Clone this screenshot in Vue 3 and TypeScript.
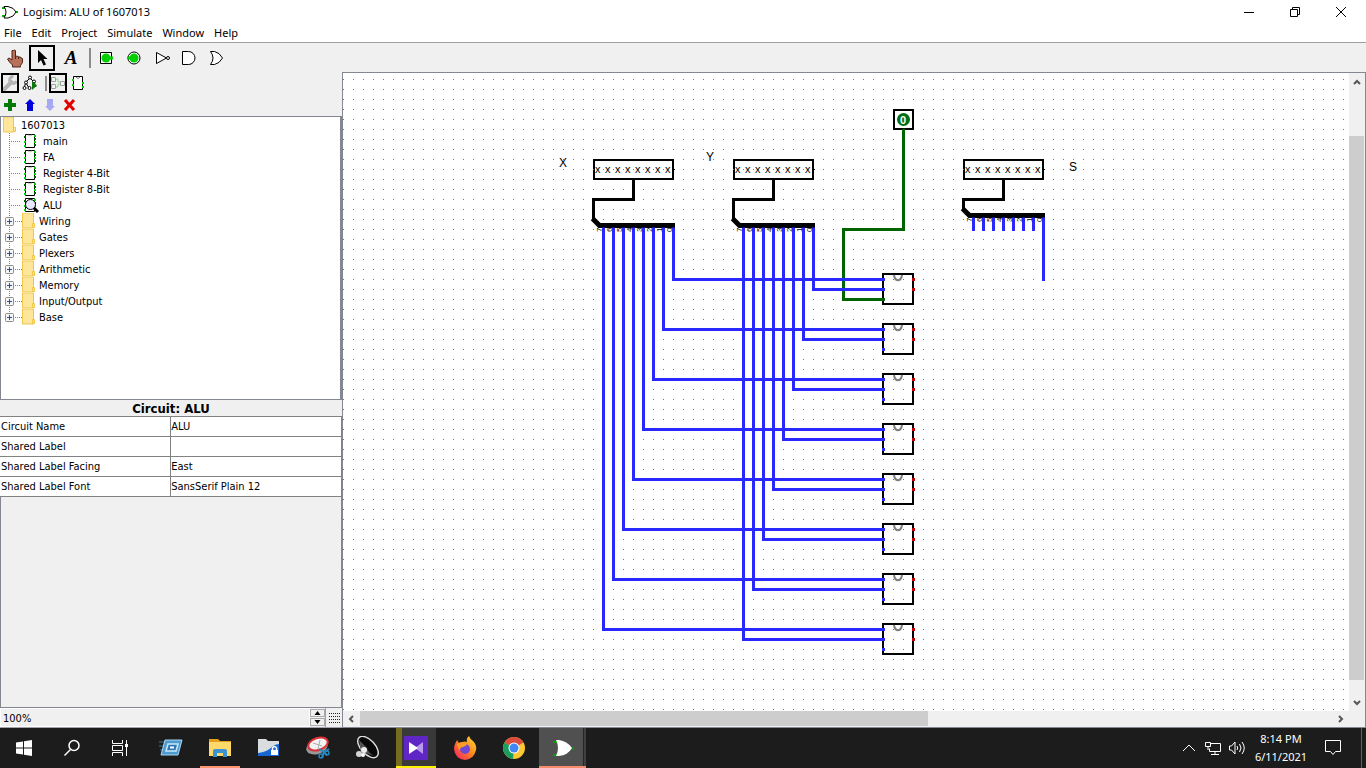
<script setup lang="ts">
import { ref } from 'vue'

const menus = ['File', 'Edit', 'Project', 'Simulate', 'Window', 'Help']
const circuits = ['main', 'FA', 'Register 4-Bit', 'Register 8-Bit', 'ALU']
const libraries = ['Wiring', 'Gates', 'Plexers', 'Arithmetic', 'Memory', 'Input/Output', 'Base']
const attributes = [
  ['Circuit Name', 'ALU'],
  ['Shared Label', ''],
  ['Shared Label Facing', 'East'],
  ['Shared Label Font', 'SansSerif Plain 12'],
]
const zoom = ref('100%')

const bits = [0, 1, 2, 3, 4, 5, 6, 7]
const inputs = [
  { x: 593, bar: 225 },
  { x: 733, bar: 225 },
  { x: 963, bar: 215 },
]
const wireX = (i: number) => `M${673 - 10 * i} 227V${279 + 50 * i}H884.5`
const wireY = (i: number) => `M${813 - 10 * i} 227V${289 + 50 * i}H884.5`
</script>

<template>
  <div class="screen">
    <header class="titlebar">
      <svg class="app-icon" width="18" height="18" viewBox="0 0 18 18">
        <path d="M1 5h4M1 13h4M14 9h3" stroke="#00b000" stroke-width="2" />
        <path d="M3 3.500h4q6 1 8 5.500-2 5-8 6h-4q4-6 0-11.500z" fill="#fff" stroke="#000" />
      </svg>
      <span class="title">Logisim: ALU of 1607013</span>
      <button class="win" aria-label="Minimize"><svg width="12" height="12"><path d="M1 6.500h10" stroke="#000" /></svg></button>
      <button class="win" aria-label="Restore"><svg width="12" height="12"><path d="M1.500 3.500h7v7h-7zM3.500 3v-1.500h7v7h-1.500" fill="none" stroke="#000" /></svg></button>
      <button class="win" aria-label="Close"><svg width="12" height="12"><path d="M1 1l10 10M11 1l-10 10" stroke="#000" /></svg></button>
    </header>
    <nav class="menubar">
      <button v-for="m in menus" :key="m">{{ m }}</button>
    </nav>
    <div class="toolbar">
      <button class="tool" aria-label="Poke">
        <svg width="26" height="26"><path d="M12.500 5.500q1-1 2 0v6l2-.5 1 1 2 0 .5 1 1.500.5v4l-2 3v1.500h-8v-2l-3-3-2-3 1.500-1 3 2v-9.500z" fill="#b9705a" stroke="#4d2417" /><path d="M14.500 11v3M17.500 12v2" stroke="#4d2417" /></svg>
      </button>
      <button class="tool on" aria-label="Select">
        <svg width="26" height="26"><path d="M9 5v13l3-3 2.500 5.500 2.500-1-2.500-5.500h4z" fill="#000" /></svg>
      </button>
      <button class="tool letter" aria-label="Text">A</button>
      <span class="sep"></span>
      <button class="tool" aria-label="Input pin">
        <svg width="26" height="26"><path d="M7.500 7.500h11v11h-11z" fill="#fff" stroke="#000" /><circle cx="13" cy="13" r="4.500" fill="#00d000" /><path d="M17 13h3" stroke="#00d000" stroke-width="3" /></svg>
      </button>
      <button class="tool" aria-label="Output pin">
        <svg width="26" height="26"><circle cx="13" cy="13" r="6" fill="#fff" stroke="#000" /><circle cx="13" cy="13" r="4.500" fill="#00d000" /><path d="M6 13h4" stroke="#00d000" stroke-width="3" /></svg>
      </button>
      <button class="tool" aria-label="NOT gate">
        <svg width="26" height="26"><path d="M7.500 7.500v11l10-5.500z" fill="#fff" stroke="#000" /><circle cx="19" cy="13" r="1.500" fill="#fff" stroke="#000" /></svg>
      </button>
      <button class="tool" aria-label="AND gate">
        <svg width="26" height="26"><path d="M5.500 6.500h6a6 6 0 0 1 0 13h-6z" fill="#fff" stroke="#000" /></svg>
      </button>
      <button class="tool" aria-label="OR gate">
        <svg width="26" height="26"><path d="M5.500 6.500h4q5 1 8 6.500-3 5.500-8 6.500h-4q5-6.500 0-13z" fill="#fff" stroke="#000" /></svg>
      </button>
    </div>

    <div class="workspace">
      <aside class="side">
        <div class="minibar">
          <button class="mini on" aria-label="Design view">
            <svg width="18" height="20"><path d="M3.500 16l7-7" stroke="#b4b4b4" stroke-width="4" stroke-linecap="round" /><path d="M12.500 3.500a3.500 3.500 0 1 0 3 4.500" fill="none" stroke="#b4b4b4" stroke-width="3" /></svg>
          </button>
          <button class="mini" aria-label="Simulation tree">
            <svg width="18" height="20"><path d="M9 5l-4 4-2 6M5 10l3 5M9 5l4 4 2 5" fill="none" stroke="#000" /><g fill="#fff" stroke="#000"><circle cx="9" cy="4.500" r="1.500" /><circle cx="5" cy="9.500" r="1.500" /><circle cx="13" cy="8.500" r="1.500" /><circle cx="3.500" cy="15" r="1.500" /><circle cx="8.500" cy="15" r="1.500" /></g><path d="M11 8v9l5-4.500z" fill="#087a08" /></svg>
          </button>
          <span class="sep small"></span>
          <button class="mini on" aria-label="Edit layout">
            <svg width="18" height="20"><path d="M6 6h3v3M6 14h3v-3h2M9 9h2" fill="none" stroke="#8fd68f" /><g fill="#f4f4f4" stroke="#a0a0a0"><path d="M2.500 4.500h4v4h-4zM2.500 11.500h4v4h-4zM11.500 8.500h4v4h-4z" /></g></svg>
          </button>
          <button class="mini" aria-label="Edit appearance">
            <svg width="18" height="20"><path d="M4.500 3.500h9v13h-9z" fill="#fff" stroke="#000" /><path d="M7 4q2 3 4 0" fill="none" stroke="#777" /><path d="M3 7h2M3 12h2M13 10h2M13 14h2" stroke="#00d000" stroke-width="2" /></svg>
          </button>
        </div>
        <div class="minibar">
          <button class="mini" aria-label="Add circuit"><svg width="18" height="20"><path d="M9 4v12M3 10h12" stroke="#087a08" stroke-width="4" /></svg></button>
          <button class="mini" aria-label="Move up"><svg width="18" height="20"><path d="M9 4l5 5h-2v7h-6v-7h-2z" fill="#0000dc" /></svg></button>
          <button class="mini" aria-label="Move down"><svg width="18" height="20"><path d="M9 16l5-5h-2v-7h-6v7h-2z" fill="#a8a8f0" /></svg></button>
          <button class="mini" aria-label="Delete"><svg width="18" height="20"><path d="M4 5l9 10M13 5l-9 10" stroke="#e00000" stroke-width="3" /></svg></button>
        </div>
        <ul class="tree">
          <li>
            <svg width="20" height="16"><path d="M2.500 0h10v15h-10z" fill="#ffe69b" stroke="#efc64c" /><path d="M12.500 10.500h2v4h-2z" fill="#ffe69b" stroke="#efc64c" /></svg><span>1607013</span>
          </li>
          <li v-for="c in circuits" :key="c">
            <svg width="42" height="16">
              <path d="M8.500 0v16M10 8.500h10" stroke="#808080" stroke-dasharray="1 1" />
              <path d="M24.500 1.500h9v13h-9z" fill="#fff" stroke="#000" />
              <path v-if="c !== 'ALU'" d="M27 2q2 2 4 0" fill="none" stroke="#bbb" />
              <path d="M23 4h2M33 6h2M33 12h2" stroke="#006000" stroke-width="2" /><path d="M23 9h2M23 13h2M33 3h2M33 9h2" stroke="#00d800" stroke-width="2" />
              <template v-if="c === 'ALU'">
                <circle cx="29.500" cy="7.500" r="5" fill="#e8e8ff" stroke="#000" />
                <path d="M33 11l4 4" stroke="#000" stroke-width="3" />
              </template>
            </svg><span>{{ c }}</span>
          </li>
          <li v-for="(l, i) in libraries" :key="l">
            <svg width="38" height="16">
              <path :d="i < 6 ? 'M8.500 0v16' : 'M8.500 0v8'" stroke="#808080" stroke-dasharray="1 1" />
              <path d="M14 8.500h7" stroke="#808080" stroke-dasharray="1 1" />
              <rect x="4.500" y="4.500" width="8" height="8" rx="1" fill="#f5f5f5" stroke="#8c8c8c" />
              <path d="M6 8.500h5M8.500 6v5" stroke="#2b4f9c" />
              <path d="M21.500 0h11v15h-11z" fill="#ffe69b" stroke="#efc64c" /><path d="M31.500 10.500h2v4h-2z" fill="#ffe69b" stroke="#efc64c" />
            </svg><span>{{ l }}</span>
          </li>
        </ul>
        <h2 class="attr-title">Circuit: ALU</h2>
        <table class="attrs">
          <tbody>
            <tr v-for="a in attributes" :key="a[0]"><th scope="row">{{ a[0] }}</th><td>{{ a[1] }}</td></tr>
          </tbody>
        </table>
        <div class="filler"></div>
        <div class="zoombar">
          <input v-model="zoom" aria-label="Zoom" />
          <div class="spin">
            <button aria-label="Zoom in"><svg width="7" height="4"><path d="M3.500 0l3 4h-6z" /></svg></button>
            <button aria-label="Zoom out"><svg width="7" height="4"><path d="M3.500 4l3-4h-6z" /></svg></button>
          </div>
          <button class="grid" aria-label="Show grid">
            <svg width="11" height="12"><path v-for="y in 4" :key="y" :d="`M0 ${y * 3 - 1.5}h11`" stroke="#222" stroke-dasharray="1 1" /></svg>
          </button>
        </div>
      </aside>

      <main class="view">
        <div class="upper">
          <svg class="canvas" role="img" aria-label="ALU circuit">
            <defs>
              <pattern id="dots" width="10" height="10" patternUnits="userSpaceOnUse"><path d="M3 9h1v1h-1z" fill="#777" /></pattern>
            </defs>
            <g transform="translate(-343 -73)">
              <rect x="343" y="73" width="100%" height="100%" fill="url(#dots)" />
              <g class="caption"><text x="559" y="167">X</text><text x="706" y="161">Y</text><text x="1069" y="171">S</text></g>
              <g v-for="(p, n) in inputs" :key="p.x">
                <rect :x="p.x + 1" y="160" width="79" height="19" fill="#fff" stroke="#000" stroke-width="2" />
                <rect v-for="b in bits" :key="b" :x="p.x + 10 * b" y="169" width="1" height="1" fill="#777" />
                <text v-for="b in bits" :key="'x' + b" class="bit" :x="p.x + 2 + 10 * b" y="173">x</text>
                <path :d="`M${p.x + 79} 169.500h3`" stroke="#000" />
                <g transform="translate(.5 .5)" fill="none">
                  <path :d="`M${p.x + 40} 179v20h-40V${p.bar - 6}`" stroke="#000" stroke-width="3" />
                  <path :d="`M${p.x - 1} ${p.bar - 7}l7 7h75.5`" stroke="#000" stroke-width="5" />
                  <template v-if="n === 2">
                    <path v-for="b in bits" :key="b" :d="`M${p.x + 10 + 10 * b} 217V${b === 7 ? 280.5 : 230.5}`" stroke="#2828ff" stroke-width="3" />
                  </template>
                </g>
                <text v-for="b in bits" :key="'d' + b" class="digit" :transform="`translate(${p.x + 9 + 10 * b} ${p.bar + 7}) rotate(-90)`">{{ 7 - b }}</text>
              </g>
              <rect v-for="i in bits" :key="'chip' + i" x="883" :y="274 + 50 * i" width="30" height="30" fill="none" stroke="#000" stroke-width="2" />
              <path v-for="i in bits" :key="'n' + i" :d="`M894 ${275 + 50 * i}c1 7 7 7 8 0`" fill="none" stroke="#808080" stroke-width="2" />
              <g transform="translate(.5 .5)" fill="none" stroke-width="3">
                <path d="M903 129v100h-60v70h41.500" stroke="#006400" />
                <path v-for="i in bits" :key="'a' + i" :d="wireX(i)" stroke="#2828ff" />
                <path v-for="i in bits" :key="'b' + i" :d="wireY(i)" stroke="#2828ff" />
              </g>
              <rect v-for="i in 7" :key="'c' + i" x="882" :y="298 + 50 * i" width="3" height="3" fill="#2828ff" />
              <template v-for="i in bits" :key="'r' + i">
                <rect x="912" :y="278 + 50 * i" width="3" height="3" fill="#c00000" />
                <rect x="912" :y="288 + 50 * i" width="3" height="3" fill="#c00000" />
              </template>
              <rect x="894" y="110" width="19" height="19" fill="#fff" stroke="#000" stroke-width="2" />
              <circle cx="903.500" cy="119.500" r="6.500" fill="#006e12" />
              <text class="zero" x="903" y="124">0</text>
              <path d="M902 129h3v2h-3z" fill="#006400" />
            </g>
          </svg>
          <div class="vscroll">
            <button aria-label="Scroll up"><svg width="8" height="8"><path d="M1 6l3-3 3 3" /></svg></button>
            <div class="vtrack"><div class="thumb"></div></div>
            <button aria-label="Scroll down"><svg width="8" height="8"><path d="M1 2l3 3 3-3" /></svg></button>
          </div>
        </div>
        <div class="hscroll">
          <button aria-label="Scroll left"><svg width="8" height="8"><path d="M5 1l-3 3 3 3" /></svg></button>
          <div class="htrack"><div class="thumb"></div></div>
          <button aria-label="Scroll right"><svg width="8" height="8"><path d="M3 1l3 3-3 3" /></svg></button>
        </div>
      </main>
    </div>

    <footer class="taskbar">
      <button class="sys" aria-label="Start"><svg width="16" height="16" fill="#fff"><path d="M0 2.500l7-1v6h-7zM8 1.300l8-1.300v7.500h-8zM0 8.500h7v6l-7-1zM8 8.500h8v7.500l-8-1.300z" /></svg></button>
      <button class="sys" aria-label="Search"><svg width="18" height="18" fill="none" stroke="#fff" stroke-width="1.500"><circle cx="11" cy="6.500" r="5" /><path d="M7.500 10.500l-6 6" /></svg></button>
      <button class="sys" aria-label="Task View"><svg width="18" height="16" fill="none" stroke="#fff"><path d="M1.500 0v3.500h10v-3.500M1.500 16v-3.500h10v3.500M1.500 5.500h10v5h-10zM15.500 0v16" /><path d="M14 4h3v3h-3z" fill="#fff" stroke="none" /></svg></button>
      <span class="gap"></span>
      <button class="app" aria-label="Run">
        <svg width="24" height="24"><path d="M0 6h5M0 10h4M1 14h3" stroke="#3a7396" /><path d="M6 4h17l-4 15h-17z" fill="#4f9bd0" stroke="#a9d7f2" /><path d="M9 8h10l-2 7h-10z" fill="#2f77b5" stroke="#c7e9fb" stroke-width="1.500" /><path d="M11 11.500h4" stroke="#fff" stroke-width="2" /></svg>
      </button>
      <button class="app open" aria-label="File Explorer">
        <svg width="24" height="24"><path d="M1 3h9l2 2h11v15h-22z" fill="#e5a11b" /><path d="M1 6h22v14h-22z" fill="#ffd96a" /><path d="M5 21v-6q0-2 2-2h10q2 0 2 2v6h-4v-4h-6v4z" fill="#3c93d4" /></svg>
      </button>
      <button class="app" aria-label="Secure folder">
        <svg width="24" height="24"><path d="M1 3h8l2 2h11v15h-21z" fill="#d9dde0" /><path d="M1 17q9-1 14-6 3-3 7-3v12h-21z" fill="#1767d2" /><path d="M14 14h7v5h-7z" fill="#fff" /><path d="M15.500 14v-2q2-3 4 0v2" fill="none" stroke="#fff" stroke-width="1.500" /></svg>
      </button>
      <button class="app" aria-label="Snipping Tool">
        <svg width="24" height="24"><ellipse cx="11" cy="11" rx="11" ry="7" fill="#999" transform="rotate(-18 11 11)" /><ellipse cx="12" cy="8" rx="10" ry="6" fill="#f2f2f2" stroke="#d9303a" stroke-width="2" transform="rotate(-18 12 8)" /><path d="M7 7l9 3M14 4l-2 9" stroke="#aaa" /><path d="M13 13l5 3 5-3M18 16l-2 5M18 16l3 3" stroke="#2888bf" stroke-width="2" fill="none" /><circle cx="15" cy="20" r="2" fill="none" stroke="#2888bf" stroke-width="1.500" /><circle cx="21" cy="17" r="2" fill="none" stroke="#2888bf" stroke-width="1.500" /></svg>
      </button>
      <button class="app" aria-label="Sound">
        <svg width="26" height="24"><ellipse cx="14" cy="11" rx="7" ry="13" fill="#080808" stroke="#ddd" stroke-width="1.500" transform="rotate(-43 14 11)" /><path d="M5 4l2 12 14 4q-7-3-8-8z" fill="#555" /><circle cx="10" cy="14" r="3" fill="#eee" /><circle cx="5" cy="18" r="3" fill="#d5d5d5" /><circle cx="9" cy="19" r="2" fill="#fff" /></svg>
      </button>
      <button class="app media" aria-label="Media player">
        <svg width="24" height="24"><rect width="24" height="24" rx="1" fill="#6026c5" /><path d="M19 6l-8 6 8 6z" fill="#b79bea" /><path d="M5 6l9 6-9 6z" fill="#fff" /></svg>
      </button>
      <button class="app" aria-label="Firefox">
        <svg width="24" height="24"><defs><linearGradient id="fx" x1="1" y1="0" x2="0" y2="1"><stop offset="0" stop-color="#ffe53b" /><stop offset=".45" stop-color="#ff8a1c" /><stop offset="1" stop-color="#f7166f" /></linearGradient></defs><path d="M2 8l2-4 2 3 3-1q3-1 5 0-1-4 2-6 1 3 4 5 4 4 3 9-2 9-11 10-10-1-11-11 0-3 1-5z" fill="url(#fx)" /><circle cx="12" cy="13" r="5" fill="#7048d8" /><path d="M4 8q4-3 8-1l2 2-4 2q-3 0-3 3-3-2-3-6z" fill="#ff9d25" /></svg>
      </button>
      <button class="app" aria-label="Chrome">
        <svg width="24" height="24"><circle cx="12" cy="12" r="11" fill="#fcc934" /><path d="M12 12L2.500 6.500a11 11 0 0 1 19 0z" fill="#dc4b3e" /><path d="M12 12L2.500 6.500a11 11 0 0 0 8.500 16.500z" fill="#1b9d5b" /><circle cx="12" cy="12" r="5.500" fill="#fff" /><circle cx="12" cy="12" r="4.500" fill="#4285f4" /></svg>
      </button>
      <button class="app active" aria-label="Logisim">
        <svg width="24" height="24"><path d="M2 6h5M2 19h5M19 12.500h4" stroke="#00a000" stroke-width="2" /><path d="M5 4q4 8 0 16h3q9-1 13-8-5-7-13-8z" fill="#fff" /></svg>
      </button>
      <div class="tray">
        <button aria-label="Hidden icons"><svg width="14" height="14"><path d="M1 10l6-6 6 6" /></svg></button>
        <button aria-label="Network"><svg width="18" height="16"><path d="M6 3.500h10.500v8h-11v-3M11 12v3M7 14.500h8M1.500 2.500h5v4h-5zM4 7v3" /></svg></button>
        <button aria-label="Volume"><svg width="18" height="14"><path d="M1.500 5h2l3.500-4v12l-3.500-4h-2zM9 5q1.500 2 0 4M11.500 3q3 4 0 8M14 1q4.500 6 0 12" /></svg></button>
        <div class="clock"><span>8:14 PM</span><span>6/11/2021</span></div>
        <button class="notes" aria-label="Notifications"><svg width="18" height="18"><path d="M1.500 1.500h15v11h-5l-2.500 3-2.500-3h-5z" /></svg></button>
        <span class="desktop"></span>
      </div>
    </footer>
  </div>
</template>

<style>
body { margin: 0; }
</style>

<style scoped>
* { box-sizing: border-box; }
button { padding: 0; border: 0; background: none; font: inherit; color: inherit; }
svg { display: block; flex: none; }
.screen { height: 100vh; display: flex; flex-direction: column; overflow: hidden; background: #fff; color: #000; font: 11px/16px "Noto Sans", "Open Sans", sans-serif; }
.titlebar { display: flex; align-items: center; height: 23px; flex: none; }
.app-icon { margin-left: 1px; }
.title { margin-left: 4px; flex: 1; }
.win { width: 46px; height: 22px; display: flex; align-items: center; justify-content: center; }
.win:last-child { margin-right: 2px; }
.menubar { display: flex; height: 20px; flex: none; padding-left: 4px; gap: 10px; border-bottom: 1px solid #a0a0a0; }
.toolbar { display: flex; align-items: center; gap: 2px; height: 29px; flex: none; padding-left: 1px; background: #f0f0f0; }
.tool { width: 26px; height: 26px; }
.on { outline: 2px solid #000; outline-offset: -2px; }
.letter { font: italic bold 19px/26px "Liberation Serif", serif; padding-left: 2px; }
.sep { width: 2px; height: 20px; margin: 0 0 0 4px; background: #8c8c8c; }
.small { height: 15px; margin-top: 3px; }
.workspace { flex: 1; min-height: 0; display: flex; }
.side { width: 343px; flex: none; display: flex; flex-direction: column; background: #f0f0f0; border-right: 1px solid #828790; font: 11px/16px "DejaVu Sans Condensed", "DejaVu Sans", sans-serif; font-stretch: condensed; }
.minibar { display: flex; gap: 2px; padding: 1px 0 0 1px; height: 22px; flex: none; align-items: flex-start; }
.mini { width: 18px; height: 20px; }
.tree { list-style: none; margin: 0; padding: 0; height: 284px; flex: none; background: #fff; border: 1px solid #828790; border-right-width: 2px; }
.tree li { display: flex; height: 16px; line-height: 18px; }
.attr-title { margin: 0; height: 16px; flex: none; font: bold 13px/18px "DejaVu Sans Condensed", "DejaVu Sans", sans-serif; text-align: center; }
.attrs { border-collapse: collapse; table-layout: fixed; width: 342px; background: #fff; }
.attrs th, .attrs td { height: 20px; padding: 1px 0 0 1px; border: 1px solid #828282; font-weight: normal; text-align: left; line-height: 16px; }
.attrs td { padding-left: 0; }
.attrs th { border-left: 0; }
.filler { flex: 1; border: 1px solid #828790; border-top: 0; }
.zoombar { height: 20px; flex: none; display: flex; border-bottom: 1px solid #a0a4aa; }
.zoombar input { flex: 1; min-width: 0; border: 1px solid #fff; background: #f0f0f0; padding: 2px 2px 0; font: inherit; }
.spin { width: 15px; display: flex; flex-direction: column; gap: 1px; padding: 1px 0; }
.spin button { flex: 1; border: 1px solid #aaa; display: flex; align-items: center; justify-content: center; }
.grid { width: 17px; display: flex; align-items: center; justify-content: center; border-left: 1px solid #a0a4aa; }
.view { flex: 1; min-width: 0; display: flex; flex-direction: column; border: 1px solid #828790; border-left: 0; }
.upper { flex: 1; min-height: 0; display: flex; }
.canvas { flex: 1; min-width: 0; height: 100%; }
.caption { font: 12px "Liberation Sans", sans-serif; }
.bit { font: 11px "Liberation Sans", sans-serif; }
.digit { font: 8px "Liberation Sans", sans-serif; }
.zero { font: bold 11px "Liberation Sans", sans-serif; fill: #fff; text-anchor: middle; }
.vscroll { width: 16px; flex: none; display: flex; flex-direction: column; background: #f0f0f0; }
.vscroll button, .hscroll button { width: 15px; height: 17px; flex: none; display: flex; align-items: center; justify-content: center; }
.vscroll path, .hscroll path { fill: none; stroke: #555; stroke-width: 2; }
.vtrack { flex: 1; padding: 46px 1px 14px 0; }
.thumb { background: #cdcdcd; height: 100%; }
.hscroll { height: 16px; flex: none; display: flex; background: #f0f0f0; padding-right: 17px; }
.hscroll button { width: 17px; height: 15px; }
.htrack { flex: 1; }
.htrack .thumb { width: 58.5%; height: 15px; }
.taskbar { height: 40px; flex: none; display: flex; background: #1c1c1c; color: #fff; }
.sys { width: 48px; display: flex; align-items: center; justify-content: center; }
.gap { width: 2px; }
.app { width: 49px; display: flex; align-items: center; justify-content: center; }
.open { background: linear-gradient(#ff9470, #ff9470) center bottom / 40px 2px no-repeat; }
.media { background: linear-gradient(#fff200, #fff200) 5px bottom / 40px 2px no-repeat, linear-gradient(90deg, #1c1c1c 5px, #746c1f 5px 11px, #393939 11px 45px, #1c1c1c 45px); }
.active { background: linear-gradient(#f58c6c, #f58c6c) center bottom / 47px 2px no-repeat, linear-gradient(90deg, #1c1c1c 1px, #505050 1px 45px, #252525 45px 46px, #404040 46px 48px, #1c1c1c 48px); }
.tray { margin-left: auto; display: flex; align-items: center; }
.tray button { width: 24px; height: 40px; display: flex; align-items: center; justify-content: center; }
.tray path { fill: none; stroke: #fff; }
.clock { width: 64px; display: flex; flex-direction: column; text-align: center; line-height: 18px; }
.tray .notes { width: 40px; margin-right: 8px; }
.desktop { width: 5px; height: 40px; border-left: 1px solid #606060; }
</style>
